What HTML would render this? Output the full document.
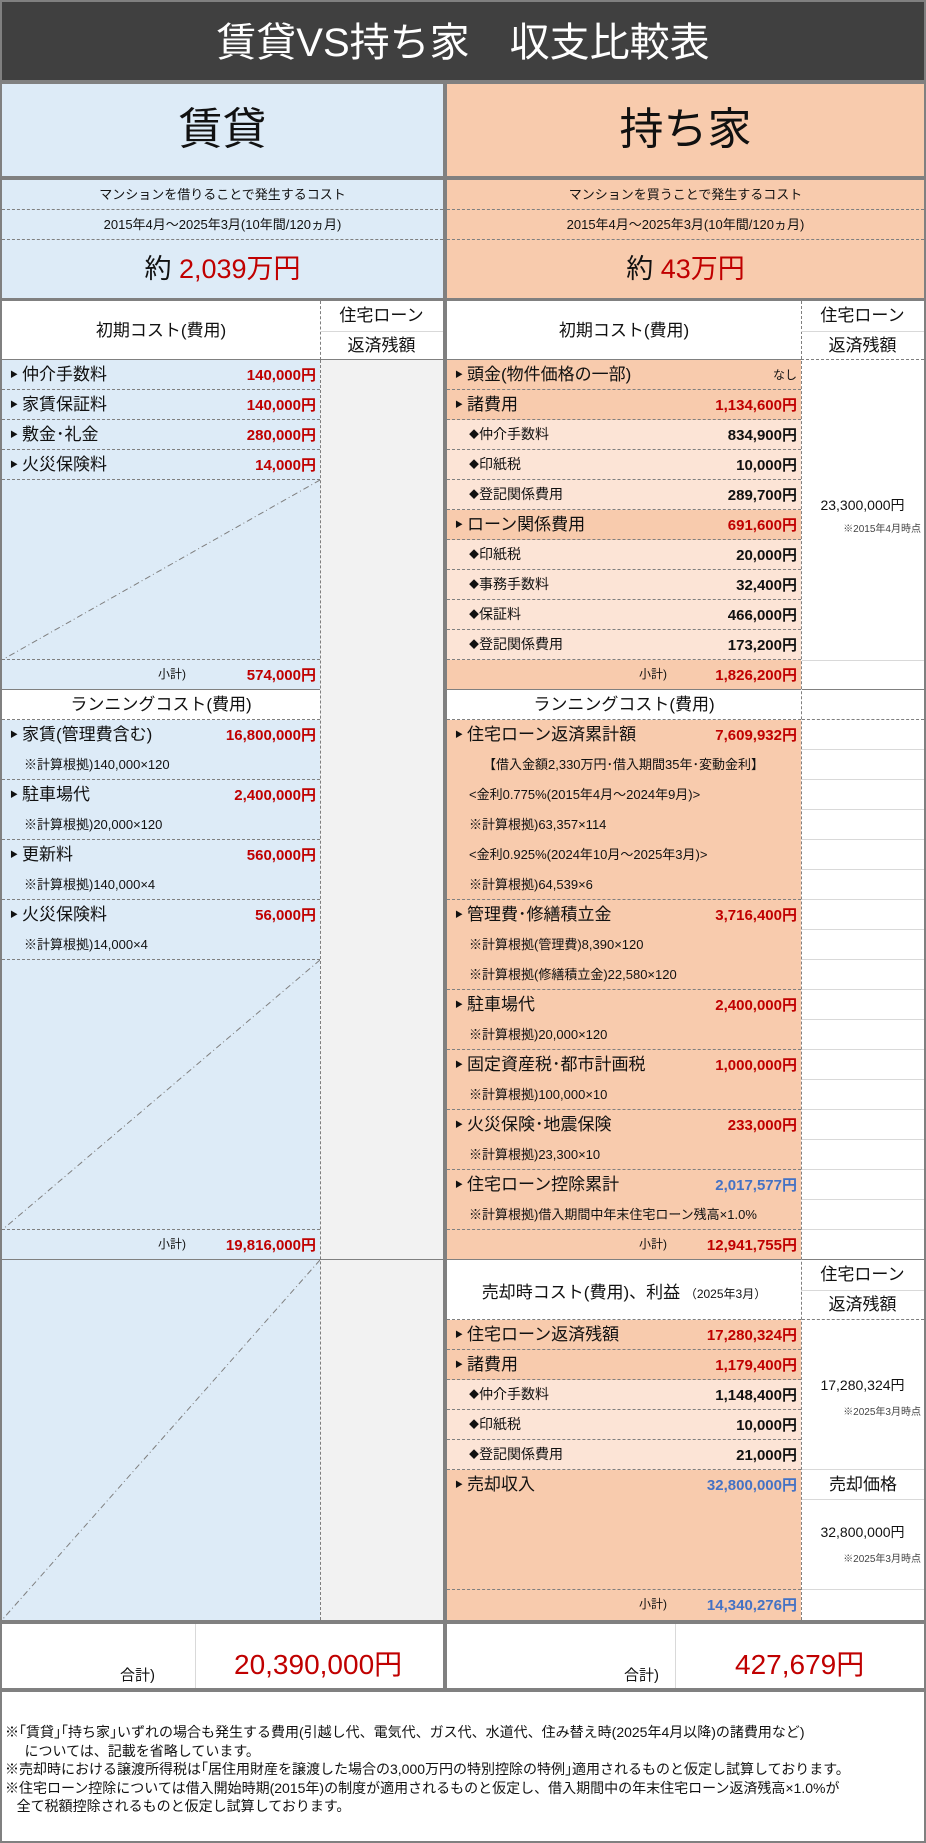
<!DOCTYPE html>
<html><head><meta charset="utf-8">
<style>
*{margin:0;padding:0;box-sizing:border-box}
body{width:926px;height:1843px;background:#fff;position:relative;overflow:hidden;font-family:"Liberation Sans","Noto Sans CJK JP",sans-serif;color:#111}
.a{position:absolute}
.r{position:absolute;height:30px;border-bottom:1px dashed #7f7f7f;font-size:17px;line-height:29px;white-space:nowrap}
.r .l{position:absolute;left:20px;top:0}
.r .t{position:absolute;left:8px;top:0;font-size:8px}
.r .v{position:absolute;right:4px;top:1px;font-size:15px;font-weight:bold;color:#c00000}
.r .v.k{color:#111}
.r .v.b{color:#4472c4}
.s{font-size:14px}
.s .l{left:22px}
.d{font-size:10px;vertical-align:1px}
.n{font-size:13px}
.n .l{left:22px}
.bl{background:#ddebf7}
.pe{background:#f8cbad}
.lp{background:#fce4d6}
.red{color:#c00000}
.hd{position:absolute;text-align:center;font-size:17px}
</style></head><body>
<div class="a" style="left:0;top:0;width:926px;height:82px;background:#404040;border:2px solid #808080;color:#fff;font-size:40px;text-align:center;line-height:82px">賃貸VS持ち家　収支比較表</div>

<div class="a bl" style="left:0;top:82px;width:445px;height:96px;border:2px solid #808080;text-align:center;font-size:44px;line-height:92px">賃貸</div>
<div class="a pe" style="left:445px;top:82px;width:481px;height:96px;border:2px solid #808080;text-align:center;font-size:44px;line-height:92px">持ち家</div>

<div class="a bl" style="left:0;top:178px;width:445px;height:122px;border:2px solid #808080"></div>
<div class="a pe" style="left:445px;top:178px;width:481px;height:122px;border:2px solid #808080"></div>
<div class="a" style="left:2px;top:180px;width:441px;height:30px;border-bottom:1px dashed #7f7f7f;text-align:center;font-size:13px;line-height:30px">マンションを借りることで発生するコスト</div>
<div class="a" style="left:447px;top:180px;width:477px;height:30px;border-bottom:1px dashed #7f7f7f;text-align:center;font-size:13px;line-height:30px">マンションを買うことで発生するコスト</div>
<div class="a" style="left:2px;top:210px;width:441px;height:30px;border-bottom:1px dashed #7f7f7f;text-align:center;font-size:13px;line-height:30px">2015年4月～2025年3月(10年間/120ヵ月)</div>
<div class="a" style="left:447px;top:210px;width:477px;height:30px;border-bottom:1px dashed #7f7f7f;text-align:center;font-size:13px;line-height:30px">2015年4月～2025年3月(10年間/120ヵ月)</div>
<div class="a" style="left:2px;top:240px;width:441px;height:58px;text-align:center;font-size:27px;line-height:58px">約 <span class="red">2,039万円</span></div>
<div class="a" style="left:447px;top:240px;width:477px;height:58px;text-align:center;font-size:27px;line-height:58px">約 <span class="red">43万円</span></div>

<div class="a" style="left:0;top:299px;width:445px;height:1323px;border:2px solid #808080;background:#ddebf7"></div>
<div class="a" style="left:445px;top:299px;width:481px;height:1323px;border:2px solid #808080;background:#f8cbad"></div>
<div class="a" style="left:320px;top:360px;width:123px;height:1260px;background:#f2f2f2;border-left:1px dashed #7f7f7f"></div>
<div class="a" style="left:801px;top:301px;width:123px;height:1319px;background:#fff;border-left:1px dashed #7f7f7f"></div>

<div class="a" style="left:2px;top:301px;width:441px;height:59px;background:#fff;border-bottom:1px solid #808080"></div>
<div class="hd" style="left:2px;top:316px;width:318px">初期コスト(費用)</div>
<div class="a" style="left:320px;top:301px;width:123px;height:59px;border-left:1px dashed #7f7f7f"></div>
<div class="hd" style="left:320px;top:303px;width:123px;height:29px;border-bottom:1px solid #d9d9d9;line-height:26px">住宅ローン</div>
<div class="hd" style="left:320px;top:332px;width:123px;line-height:28px">返済残額</div>

<div class="a" style="left:447px;top:301px;width:354px;height:59px;background:#fff;border-bottom:1px solid #808080"></div>
<div class="hd" style="left:447px;top:316px;width:354px">初期コスト(費用)</div>
<div class="a" style="left:801px;top:301px;width:123px;height:59px;border-bottom:1px dashed #7f7f7f"></div>
<div class="hd" style="left:801px;top:303px;width:123px;height:29px;border-bottom:1px solid #d9d9d9;line-height:26px">住宅ローン</div>
<div class="hd" style="left:801px;top:332px;width:123px;line-height:28px">返済残額</div>

<div class="r bl" style="left:2px;top:360px;width:318px"><span class="t">▶</span><span class="l">仲介手数料</span><span class="v">140,000円</span></div>
<div class="r bl" style="left:2px;top:390px;width:318px"><span class="t">▶</span><span class="l">家賃保証料</span><span class="v">140,000円</span></div>
<div class="r bl" style="left:2px;top:420px;width:318px"><span class="t">▶</span><span class="l">敷金･礼金</span><span class="v">280,000円</span></div>
<div class="r bl" style="left:2px;top:450px;width:318px"><span class="t">▶</span><span class="l">火災保険料</span><span class="v">14,000円</span></div>
<div class="r bl" style="left:2px;top:480px;width:318px;height:180px"></div>
<svg class="a" style="left:2px;top:480px" width="318" height="180"><line x1="318" y1="0" x2="0" y2="180" stroke="#7f7f7f" stroke-dasharray="6,3,1,3"/></svg>
<div class="r bl" style="left:2px;top:660px;width:318px;border-bottom:1px solid #808080"><span class="a" style="left:156px;font-size:12px">小計)</span><span class="v">574,000円</span></div>
<div class="a" style="left:2px;top:690px;width:318px;height:30px;background:#fff;border-bottom:1px dashed #7f7f7f;text-align:center;font-size:17px;line-height:29px">ランニングコスト(費用)</div>

<div class="a bl" style="left:2px;top:720px;width:318px;height:60px;border-bottom:1px dashed #7f7f7f"></div>
<div class="r" style="left:2px;top:720px;width:318px;border:0"><span class="t">▶</span><span class="l">家賃(管理費含む)</span><span class="v">16,800,000円</span></div>
<div class="r n" style="left:2px;top:750px;width:318px;border:0"><span class="l">※計算根拠)140,000×120</span></div>
<div class="a bl" style="left:2px;top:780px;width:318px;height:60px;border-bottom:1px dashed #7f7f7f"></div>
<div class="r" style="left:2px;top:780px;width:318px;border:0"><span class="t">▶</span><span class="l">駐車場代</span><span class="v">2,400,000円</span></div>
<div class="r n" style="left:2px;top:810px;width:318px;border:0"><span class="l">※計算根拠)20,000×120</span></div>
<div class="a bl" style="left:2px;top:840px;width:318px;height:60px;border-bottom:1px dashed #7f7f7f"></div>
<div class="r" style="left:2px;top:840px;width:318px;border:0"><span class="t">▶</span><span class="l">更新料</span><span class="v">560,000円</span></div>
<div class="r n" style="left:2px;top:870px;width:318px;border:0"><span class="l">※計算根拠)140,000×4</span></div>
<div class="a bl" style="left:2px;top:900px;width:318px;height:60px;border-bottom:1px dashed #7f7f7f"></div>
<div class="r" style="left:2px;top:900px;width:318px;border:0"><span class="t">▶</span><span class="l">火災保険料</span><span class="v">56,000円</span></div>
<div class="r n" style="left:2px;top:930px;width:318px;border:0"><span class="l">※計算根拠)14,000×4</span></div>
<div class="r bl" style="left:2px;top:960px;width:318px;height:270px"></div>
<svg class="a" style="left:2px;top:960px" width="318" height="270"><line x1="318" y1="0" x2="0" y2="270" stroke="#7f7f7f" stroke-dasharray="6,3,1,3"/></svg>
<div class="r bl" style="left:2px;top:1230px;width:318px;border-bottom:1px solid #808080"><span class="a" style="left:156px;font-size:12px">小計)</span><span class="v">19,816,000円</span></div>
<div class="a" style="left:320px;top:1259px;width:123px;height:1px;background:#808080"></div>
<svg class="a" style="left:2px;top:1260px" width="318" height="360"><line x1="318" y1="0" x2="0" y2="360" stroke="#7f7f7f" stroke-dasharray="6,3,1,3"/></svg>

<div class="r pe" style="left:447px;top:360px;width:354px"><span class="t">▶</span><span class="l">頭金(物件価格の一部)</span><span class="v k" style="font-size:12px;font-weight:normal">なし</span></div>
<div class="r pe" style="left:447px;top:390px;width:354px"><span class="t">▶</span><span class="l">諸費用</span><span class="v">1,134,600円</span></div>
<div class="r lp s" style="left:447px;top:420px;width:354px"><span class="l"><span class="d">◆</span>仲介手数料</span><span class="v k">834,900円</span></div>
<div class="r lp s" style="left:447px;top:450px;width:354px"><span class="l"><span class="d">◆</span>印紙税</span><span class="v k">10,000円</span></div>
<div class="r lp s" style="left:447px;top:480px;width:354px"><span class="l"><span class="d">◆</span>登記関係費用</span><span class="v k">289,700円</span></div>
<div class="r pe" style="left:447px;top:510px;width:354px"><span class="t">▶</span><span class="l">ローン関係費用</span><span class="v">691,600円</span></div>
<div class="r lp s" style="left:447px;top:540px;width:354px"><span class="l"><span class="d">◆</span>印紙税</span><span class="v k">20,000円</span></div>
<div class="r lp s" style="left:447px;top:570px;width:354px"><span class="l"><span class="d">◆</span>事務手数料</span><span class="v k">32,400円</span></div>
<div class="r lp s" style="left:447px;top:600px;width:354px"><span class="l"><span class="d">◆</span>保証料</span><span class="v k">466,000円</span></div>
<div class="r lp s" style="left:447px;top:630px;width:354px"><span class="l"><span class="d">◆</span>登記関係費用</span><span class="v k">173,200円</span></div>
<div class="r pe" style="left:447px;top:660px;width:354px;border-bottom:1px solid #808080"><span class="a" style="left:192px;font-size:12px">小計)</span><span class="v">1,826,200円</span></div>
<div class="a" style="left:801px;top:495px;width:123px;text-align:center;font-size:14px">23,300,000円</div>
<div class="a" style="left:801px;top:520px;width:120px;text-align:right;font-size:10px;color:#444">※2015年4月時点</div>
<div class="a" style="left:802px;top:660px;width:122px;height:1px;background:#d9d9d9"></div>
<div class="a" style="left:802px;top:689px;width:122px;height:1px;background:#808080"></div>
<div class="a" style="left:447px;top:690px;width:354px;height:30px;background:#fff;border-bottom:1px dashed #7f7f7f;text-align:center;font-size:17px;line-height:29px">ランニングコスト(費用)</div>
<div class="a" style="left:802px;top:719px;width:122px;height:1px;border-top:1px dashed #7f7f7f"></div>

<div class="a" style="left:802px;top:720px;width:122px;height:540px;background:repeating-linear-gradient(to bottom,transparent 0,transparent 29px,#d9d9d9 29px,#d9d9d9 30px)"></div>

<div class="a" style="left:447px;top:720px;width:354px;height:180px;border-bottom:1px dashed #7f7f7f"></div>
<div class="r" style="left:447px;top:720px;width:354px;border:0"><span class="t">▶</span><span class="l">住宅ローン返済累計額</span><span class="v">7,609,932円</span></div>
<div class="r n" style="left:447px;top:750px;width:354px;border:0"><span class="l" style="left:36px">【借入金額2,330万円･借入期間35年･変動金利】</span></div>
<div class="r n" style="left:447px;top:780px;width:354px;border:0"><span class="l">&lt;金利0.775%(2015年4月～2024年9月)&gt;</span></div>
<div class="r n" style="left:447px;top:810px;width:354px;border:0"><span class="l">※計算根拠)63,357×114</span></div>
<div class="r n" style="left:447px;top:840px;width:354px;border:0"><span class="l">&lt;金利0.925%(2024年10月～2025年3月)&gt;</span></div>
<div class="r n" style="left:447px;top:870px;width:354px;border:0"><span class="l">※計算根拠)64,539×6</span></div>

<div class="a" style="left:447px;top:900px;width:354px;height:90px;border-bottom:1px dashed #7f7f7f"></div>
<div class="r" style="left:447px;top:900px;width:354px;border:0"><span class="t">▶</span><span class="l">管理費･修繕積立金</span><span class="v">3,716,400円</span></div>
<div class="r n" style="left:447px;top:930px;width:354px;border:0"><span class="l">※計算根拠(管理費)8,390×120</span></div>
<div class="r n" style="left:447px;top:960px;width:354px;border:0"><span class="l">※計算根拠(修繕積立金)22,580×120</span></div>

<div class="a" style="left:447px;top:990px;width:354px;height:60px;border-bottom:1px dashed #7f7f7f"></div>
<div class="r" style="left:447px;top:990px;width:354px;border:0"><span class="t">▶</span><span class="l">駐車場代</span><span class="v">2,400,000円</span></div>
<div class="r n" style="left:447px;top:1020px;width:354px;border:0"><span class="l">※計算根拠)20,000×120</span></div>

<div class="a" style="left:447px;top:1050px;width:354px;height:60px;border-bottom:1px dashed #7f7f7f"></div>
<div class="r" style="left:447px;top:1050px;width:354px;border:0"><span class="t">▶</span><span class="l">固定資産税･都市計画税</span><span class="v">1,000,000円</span></div>
<div class="r n" style="left:447px;top:1080px;width:354px;border:0"><span class="l">※計算根拠)100,000×10</span></div>

<div class="a" style="left:447px;top:1110px;width:354px;height:60px;border-bottom:1px dashed #7f7f7f"></div>
<div class="r" style="left:447px;top:1110px;width:354px;border:0"><span class="t">▶</span><span class="l">火災保険･地震保険</span><span class="v">233,000円</span></div>
<div class="r n" style="left:447px;top:1140px;width:354px;border:0"><span class="l">※計算根拠)23,300×10</span></div>

<div class="a" style="left:447px;top:1170px;width:354px;height:60px;border-bottom:1px dashed #7f7f7f"></div>
<div class="r" style="left:447px;top:1170px;width:354px;border:0"><span class="t">▶</span><span class="l">住宅ローン控除累計</span><span class="v b">2,017,577円</span></div>
<div class="r n" style="left:447px;top:1200px;width:354px;border:0"><span class="l">※計算根拠)借入期間中年末住宅ローン残高×1.0%</span></div>
<div class="r" style="left:447px;top:1230px;width:354px;border-bottom:1px solid #808080"><span class="a" style="left:192px;font-size:12px">小計)</span><span class="v">12,941,755円</span></div>
<div class="a" style="left:802px;top:1259px;width:122px;height:1px;background:#808080"></div>

<div class="a" style="left:447px;top:1260px;width:354px;height:60px;background:#fff;border-bottom:1px dashed #7f7f7f"></div>
<div class="a" style="left:447px;top:1278px;width:354px;text-align:center;font-size:17px">売却時コスト(費用)、利益 <span style="font-size:12px">（2025年3月）</span></div>
<div class="a" style="left:802px;top:1260px;width:122px;height:60px;border-bottom:1px dashed #7f7f7f"></div>
<div class="hd" style="left:801px;top:1262px;width:123px;height:29px;border-bottom:1px solid #d9d9d9;line-height:26px">住宅ローン</div>
<div class="hd" style="left:801px;top:1291px;width:123px;line-height:28px">返済残額</div>

<div class="r pe" style="left:447px;top:1320px;width:354px"><span class="t">▶</span><span class="l">住宅ローン返済残額</span><span class="v">17,280,324円</span></div>
<div class="r pe" style="left:447px;top:1350px;width:354px"><span class="t">▶</span><span class="l">諸費用</span><span class="v">1,179,400円</span></div>
<div class="r lp s" style="left:447px;top:1380px;width:354px"><span class="l"><span class="d">◆</span>仲介手数料</span><span class="v k">1,148,400円</span></div>
<div class="r lp s" style="left:447px;top:1410px;width:354px"><span class="l"><span class="d">◆</span>印紙税</span><span class="v k">10,000円</span></div>
<div class="r lp s" style="left:447px;top:1440px;width:354px"><span class="l"><span class="d">◆</span>登記関係費用</span><span class="v k">21,000円</span></div>
<div class="r pe" style="left:447px;top:1470px;width:354px;height:120px"><span class="t">▶</span><span class="l">売却収入</span><span class="v b">32,800,000円</span></div>
<div class="r pe" style="left:447px;top:1590px;width:354px;border:0"><span class="a" style="left:192px;font-size:12px">小計)</span><span class="v b">14,340,276円</span></div>

<div class="a" style="left:801px;top:1375px;width:123px;text-align:center;font-size:14px">17,280,324円</div>
<div class="a" style="left:801px;top:1403px;width:120px;text-align:right;font-size:10px;color:#444">※2025年3月時点</div>
<div class="a" style="left:802px;top:1469px;width:122px;height:31px;border-top:1px solid #d9d9d9;border-bottom:1px solid #d9d9d9;text-align:center;font-size:17px;line-height:29px">売却価格</div>
<div class="a" style="left:801px;top:1522px;width:123px;text-align:center;font-size:14px">32,800,000円</div>
<div class="a" style="left:801px;top:1550px;width:120px;text-align:right;font-size:10px;color:#444">※2025年3月時点</div>
<div class="a" style="left:802px;top:1589px;width:122px;height:1px;background:#d9d9d9"></div>

<div class="a" style="left:0;top:1622px;width:445px;height:68px;border:2px solid #808080;background:#fff"></div>
<div class="a" style="left:195px;top:1624px;width:1px;height:64px;background:#d9d9d9"></div>
<div class="a" style="left:120px;top:1664px;font-size:15px">合計)</div>
<div class="a" style="left:234px;top:1648px;font-size:28px;line-height:34px;color:#c00000">20,390,000円</div>
<div class="a" style="left:445px;top:1622px;width:481px;height:68px;border:2px solid #808080;background:#fff"></div>
<div class="a" style="left:675px;top:1624px;width:1px;height:64px;background:#d9d9d9"></div>
<div class="a" style="left:624px;top:1664px;font-size:15px">合計)</div>
<div class="a" style="left:735px;top:1648px;font-size:28px;line-height:34px;color:#c00000">427,679円</div>

<div class="a" style="left:0;top:1690px;width:926px;height:153px;border:2px solid #808080;background:#fff;font-size:14px;line-height:18.5px;padding:31px 0 0 3px;white-space:nowrap">
※｢賃貸｣｢持ち家｣いずれの場合も発生する費用(引越し代、電気代、ガス代、水道代、住み替え時(2025年4月以降)の諸費用など)<br>
&nbsp;&nbsp;&nbsp;&nbsp;&nbsp;については、記載を省略しています。<br>
※売却時における譲渡所得税は｢居住用財産を譲渡した場合の3,000万円の特別控除の特例｣適用されるものと仮定し試算しております。<br>
※住宅ローン控除については借入開始時期(2015年)の制度が適用されるものと仮定し、借入期間中の年末住宅ローン返済残高×1.0%が<br>
&nbsp;&nbsp;&nbsp;全て税額控除されるものと仮定し試算しております。
</div>
</body></html>
